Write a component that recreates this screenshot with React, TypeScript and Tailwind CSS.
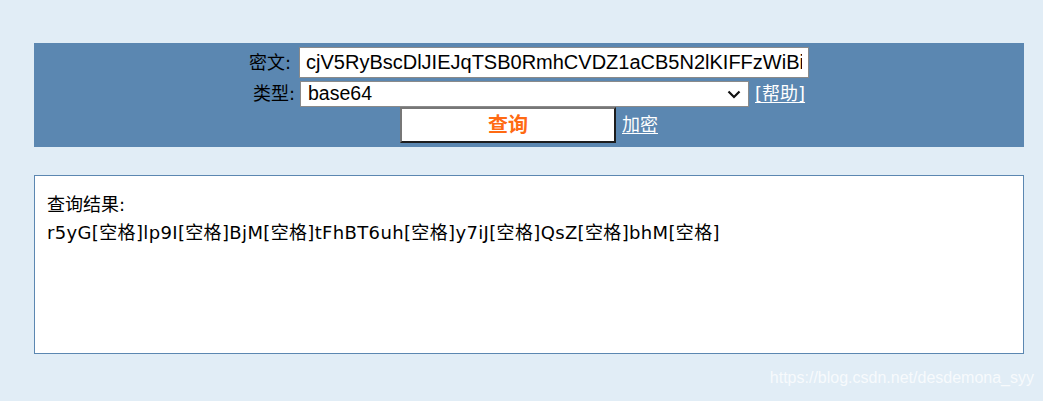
import React from "react";

const cjk = { fontFamily: '"DejaVu Sans", "Noto Sans CJK SC", sans-serif' };
const latin = { fontFamily: '"Liberation Sans", Arial, "Noto Sans CJK SC", sans-serif' };

export default function App() {
  return (
    <div className="min-h-[401px] bg-[#e1edf6] pl-[34px] pr-[19px] pt-[43px] pb-[46px] text-black">
      <div className="bg-[#5b87b1] pt-[4px] pb-[4px] flex flex-col items-center text-[18px]" style={cjk}>
        <div className="flex items-center h-[31px]">
          <span className="mr-[8px] leading-none">密文:</span>
          <input
            readOnly
            value="cjV5RyBscDlJIEJqTSB0RmhCVDZ1aCB5N2lKIFFzWiBiaE0g"
            style={latin}
            className="w-[510px] h-[31px] bg-white border border-[#8a8a8a] px-[6px] text-[20px] outline-none"
          />
        </div>
        <div className="flex items-center h-[26px] mt-[3px]">
          <span className="mr-[5px] leading-none">类型:</span>
          <div
            style={latin}
            className="relative w-[449px] h-[26px] bg-white border border-[#8a8a8a] flex items-center px-[7px] text-[19.5px]"
          >
            base64
            <svg
              className="absolute right-[7px] top-[7px]"
              width="14"
              height="10"
              viewBox="0 0 14 10"
              fill="none"
              stroke="#111"
              strokeWidth="2.2"
            >
              <path d="M1.5 2.5 L7 8 L12.5 2.5" />
            </svg>
          </div>
          <a className="ml-[6px] text-white underline underline-offset-2 leading-none">[帮助]</a>
        </div>
        <div className="flex items-center h-[36px]">
          <button className="w-[216px] h-[36px] bg-white border-[2px] border-t-[#777] border-l-[#777] border-b-[#1d1d1d] border-r-[#1d1d1d] text-[#ff6a13] font-bold text-[20px]">
            查询
          </button>
          <a className="ml-[6px] text-white underline underline-offset-2 leading-none">加密</a>
        </div>
      </div>

      <div
        className="mt-[28px] h-[179px] bg-white border border-[#5b87b1] px-[12px] pt-[15px] text-[18px] leading-[28px]"
        style={cjk}
      >
        <div>查询结果:</div>
        <div className="tracking-[0.35px]">
          r5yG[空格]lp9I[空格]BjM[空格]tFhBT6uh[空格]y7iJ[空格]QsZ[空格]bhM[空格]
        </div>
      </div>

      <div className="relative" style={latin}>
        <span className="absolute right-[-10px] top-[12px] text-[16px] text-white/75">
          https://blog.csdn.net/desdemona_syy
        </span>
      </div>
    </div>
  );
}
